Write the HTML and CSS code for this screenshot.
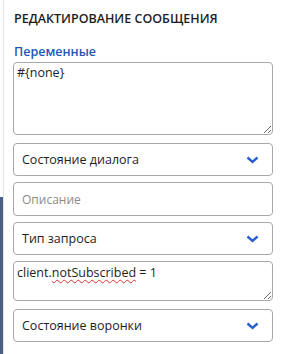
FILE: index.html
```html
<!DOCTYPE html>
<html lang="ru">
<head>
  <meta charset="UTF-8">
  <meta name="viewport" content="width=device-width, initial-scale=1.0">
  <title>Редактирование сообщения</title>
  <link rel="stylesheet" href="styles.css">
</head>
<body>

<div class="layout">
  <!-- strip of the neighbouring panel -->
  <div class="edge">
    <div class="edge-bar"></div>
  </div>

  <section class="panel">
    <h2 class="panel-title">РЕДАКТИРОВАНИЕ СООБЩЕНИЯ</h2>

    <label class="field-label" for="vars">Переменные</label>
    <textarea id="vars" class="field area-big">#{none}</textarea>

    <div class="field select">
      <span>Состояние диалога</span>
      <svg class="chevron" width="13" height="8" viewBox="0 0 13 8"><path d="M1.5 1.5 L6.5 6 L11.5 1.5" fill="none" stroke="#2b5fcf" stroke-width="2.4"/></svg>
    </div>

    <div class="field input placeholder">Описание</div>

    <div class="field select">
      <span>Тип запроса</span>
      <svg class="chevron" width="13" height="8" viewBox="0 0 13 8"><path d="M1.5 1.5 L6.5 6 L11.5 1.5" fill="none" stroke="#2b5fcf" stroke-width="2.4"/></svg>
    </div>

    <div class="field area-small">client.<span class="typo">notSubscribed</span> = 1</div>

    <div class="field select">
      <span>Состояние воронки</span>
      <svg class="chevron" width="13" height="8" viewBox="0 0 13 8"><path d="M1.5 1.5 L6.5 6 L11.5 1.5" fill="none" stroke="#2b5fcf" stroke-width="2.4"/></svg>
    </div>
  </section>
</div>

</body>
</html>
```

FILE: styles.css
```css
html, body {
  margin: 0;
  height: 100%;
}
body {
  font-family: "Open Sans", "Noto Sans", sans-serif;
  font-size: 12.5px;
  color: #1e1e1e;
  background: #fff;
}
.layout {
  display: flex;
  height: 354px;
}
.edge {
  width: 3px;
  display: flex;
  flex-direction: column;
  justify-content: flex-end;
}
.edge-bar {
  height: 157px;
  background-color: #4d5f80;
}
.panel {
  flex: 1;
  border-left: 1px solid #e4e4e4;
  padding: 11px 10px 0 9px;
  display: flex;
  flex-direction: column;
}
.panel-title {
  margin: 0 0 17px 1px;
  font-size: 12.5px;
  font-weight: 600;
  line-height: 16px;
}
.field-label {
  margin: 0 0 2px 1px;
  color: #1f56b5;
  font-weight: 600;
  line-height: 16px;
}
.field {
  box-sizing: border-box;
  width: 260px;
  margin-bottom: 6px;
  border: 1px solid #a8a8a8;
  border-radius: 4px;
  font-family: inherit;
  font-size: 12.5px;
  color: #1e1e1e;
  background: #fff;
}
.area-big {
  height: 73px;
  margin-bottom: 8px;
  padding: 2px 3px;
  resize: both;
  line-height: 16px;
  outline: none;
}
.area-small {
  height: 40px;
  margin-bottom: 8px;
  padding: 2px 3px;
  resize: both;
  overflow: auto;
  line-height: 18px;
}
.select, .input {
  height: 34px;
  display: flex;
  align-items: center;
  padding: 0 13px 0 8px;
}
.select {
  height: 33px;
  justify-content: space-between;
}
.placeholder {
  color: #8a8a8a;
  font-size: 12px;
}
.typo {
  text-decoration: underline wavy #e03030;
  text-decoration-thickness: 1px;
  text-underline-offset: 2px;
}
```
